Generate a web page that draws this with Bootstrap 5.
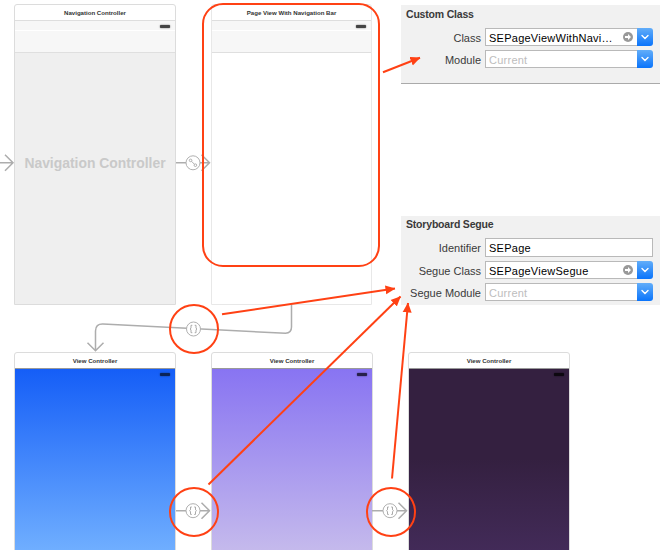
<!DOCTYPE html>
<html lang="en">
<head>
<meta charset="utf-8">
<meta name="viewport" content="width=device-width, initial-scale=1">
<title>Storyboard</title>
<link href="https://cdn.jsdelivr.net/npm/bootstrap@5.3.0/dist/css/bootstrap.min.css" rel="stylesheet">
<style>
body{font-family:"Liberation Sans",Arial,sans-serif;font-size:11px;line-height:1;color:#3a3a3a}
.storyboard{width:660px;height:550px}
/* scenes are nodes on the free canvas */
.scene{width:162px;height:301px;border:1px solid #dcdcdc;border-radius:3px 3px 0 0;background:#fff}
.scene-title{height:16px;font-size:6.1px;font-weight:700;color:#333;border-bottom:1px solid #dedede;padding-top:1px}
.scene-status{height:10px;background:#f7f7f7;border-bottom:1px solid #fff;padding:3px 5px 0 0}
.scene-nav{height:22px;background:#f7f7f7;border-bottom:1px solid #dfdfdf}
.battery{width:10px;height:3px;margin-top:.5px;border-radius:1px;background:#444;box-shadow:0 0 1.5px #444}
.s1{left:14px;top:4px}.s2{left:211px;top:4px;width:161px;border-color:#e8e8e8}
.s3{left:14px;top:352px}.s4{left:211px;top:352px}.s5{left:408px;top:352px}
.s1 .scene-body{background:#efefef;color:#c9c9c9;font-size:13.9px;font-weight:700;padding-bottom:30px}
.s3 .scene-title,.s4 .scene-title,.s5 .scene-title{border-bottom-color:#999}
.s3 .scene-body,.s4 .scene-body,.s5 .scene-body{padding:3px 5px 0 0}
.s3 .scene-body{background:linear-gradient(#155ef7,#71b0ff 185px)}
.s4 .scene-body{background:linear-gradient(#8874f2,#c6bbec 185px)}
.s5 .scene-body{background:linear-gradient(#342040,#342040 90px,#432b59 185px)}
.s3 .battery{background:#0b2458;box-shadow:0 0 1.5px #0b2458}
.s4 .battery{background:#27214a;box-shadow:0 0 1.5px #27214a}
.s5 .battery{background:#0d0810;box-shadow:0 0 1.5px #0d0810}
/* inspectors */
.inspector{left:401px;width:259px;background:#f1f1f1;padding-right:7px}
.p1{top:5px;height:79px;border-bottom:1px solid #aaa}
.p2{top:216px;height:89px}
.inspector h2{font-size:10.5px;font-weight:700;letter-spacing:-.19px;line-height:12px;margin:0;padding:3px 0 0 5px;height:23px}
.p2 h2{height:22px;padding-top:2px}
.prop{height:18px;margin-bottom:4px}
.prop.tall{height:19px}
.prop label{width:80px;text-align:right;padding-top:5px}
.field{width:168px;background:#fff;border:1px solid #b9b9b9;color:#000;letter-spacing:.25px;padding:2px 0 0 3px}
.combo{padding-right:0;border-right:0;width:152px}
.ghost{color:#bdbdbd}
.combo svg{margin:-3px 4px 0 0}
.drop{width:16px;background:linear-gradient(#62adf9,#0a74fb);border-radius:0 3px 3px 0}
</style>
<script src="https://cdn.jsdelivr.net/npm/bootstrap@5.3.0/dist/js/bootstrap.bundle.min.js"></script>
</head>
<body class="bg-white overflow-hidden">
<main class="storyboard position-relative overflow-hidden">
  <section class="scene s1 position-absolute d-flex flex-column">
    <div class="scene-title d-flex align-items-center justify-content-center">Navigation Controller</div>
    <div class="scene-status d-flex justify-content-end"><i class="battery"></i></div>
    <div class="scene-nav"></div>
    <div class="scene-body flex-grow-1 d-flex align-items-center justify-content-center text-nowrap">Navigation Controller</div>
  </section>
  <section class="scene s2 position-absolute d-flex flex-column">
    <div class="scene-title d-flex align-items-center justify-content-center">Page View With Navigation Bar</div>
    <div class="scene-status d-flex justify-content-end"><i class="battery"></i></div>
    <div class="scene-nav"></div>
    <div class="scene-body flex-grow-1"></div>
  </section>
  <section class="scene s3 position-absolute d-flex flex-column">
    <div class="scene-title d-flex align-items-center justify-content-center">View Controller</div>
    <div class="scene-body flex-grow-1 d-flex justify-content-end"><i class="battery"></i></div>
  </section>
  <section class="scene s4 position-absolute d-flex flex-column">
    <div class="scene-title d-flex align-items-center justify-content-center">View Controller</div>
    <div class="scene-body flex-grow-1 d-flex justify-content-end"><i class="battery"></i></div>
  </section>
  <section class="scene s5 position-absolute d-flex flex-column">
    <div class="scene-title d-flex align-items-center justify-content-center">View Controller</div>
    <div class="scene-body flex-grow-1 d-flex justify-content-end"><i class="battery"></i></div>
  </section>

  <aside class="inspector p1 position-absolute">
    <h2>Custom Class</h2>
    <div class="prop d-flex"><label class="me-1">Class</label><div class="field combo d-flex align-items-center justify-content-between text-nowrap"><span>SEPageViewWithNavi…</span><svg width="10" height="10"><use href="#go"/></svg></div><div class="drop"><svg class="d-block" width="16" height="18"><use href="#chev"/></svg></div></div>
    <div class="prop d-flex"><label class="me-1">Module</label><div class="field combo ghost d-flex align-items-center">Current</div><div class="drop"><svg class="d-block" width="16" height="18"><use href="#chev"/></svg></div></div>
  </aside>
  <aside class="inspector p2 position-absolute">
    <h2>Storyboard Segue</h2>
    <div class="prop tall d-flex"><label class="me-1">Identifier</label><div class="field d-flex align-items-center">SEPage</div></div>
    <div class="prop d-flex"><label class="me-1">Segue Class</label><div class="field combo d-flex align-items-center justify-content-between"><span>SEPageViewSegue</span><svg width="10" height="10"><use href="#go"/></svg></div><div class="drop"><svg class="d-block" width="16" height="18"><use href="#chev"/></svg></div></div>
    <div class="prop d-flex"><label class="me-1">Segue Module</label><div class="field combo ghost d-flex align-items-center">Current</div><div class="drop"><svg class="d-block" width="16" height="18"><use href="#chev"/></svg></div></div>
  </aside>

  <svg class="position-absolute top-0 start-0" width="660" height="550" fill="none">
    <defs>
      <symbol id="go" viewBox="0 0 10 10"><circle cx="5" cy="5" r="5" fill="#999"/><path d="M2 4h3V2l3 3-3 3V6H2z" fill="#fff"/></symbol>
      <symbol id="chev" viewBox="0 0 16 18"><path d="M5 7.400l3 3 3-3" fill="none" stroke="#fff" stroke-width="1.400" stroke-linecap="round"/></symbol>
      <g id="braces"><circle r="7" fill="#fff" stroke="#b0b0b0"/><path d="M-1.200-3.700H-2.500V-.8L-3.500 0-2.500.8V3.700H-1.200M1.200-3.700H2.500V-.8L3.500 0 2.500.8V3.700H1.200" stroke="#aaa"/></g>
      <marker id="tip" viewBox="0 0 10 10" refX="9.500" refY="5" markerWidth="10" markerHeight="10" markerUnits="userSpaceOnUse" orient="auto"><path d="M0 .5L10 5 0 9.500z" fill="#ff4114"/></marker>
    </defs>
    <!-- segues -->
    <g stroke="#adadad" stroke-width="1.500">
      <path d="M0 162.800h13M5 154.800l8 8-8 8M176 162.800h34M201.500 154.800l8 8-8 8"/>
      <path d="M291.500 305v22q0 6-6 6.300L103 324q-7.500-.3-7.500 7v19M87.500 342.800l8 8 8-8"/>
      <path d="M176 510.700h34M201.500 502.700l8 8-8 8M372 510.700h34M398.500 502.700l8 8-8 8"/>
    </g>
    <g stroke="#b0b0b0"><circle cx="193" cy="162.800" r="7" fill="#fff"/><path d="M191.600 161.400l2.800 2.800"/><circle cx="190.600" cy="160.400" r="1.300"/><circle cx="195.400" cy="165.200" r="1.300"/></g>
    <use href="#braces" x="193.500" y="329"/>
    <use href="#braces" x="193" y="510.700"/>
    <use href="#braces" x="390" y="510.700"/>
    <!-- callouts -->
    <g stroke="#ff4114" stroke-width="2">
      <rect x="203" y="4" width="176" height="262" rx="20"/>
      <circle cx="194" cy="329" r="24"/><circle cx="194" cy="512" r="24"/><circle cx="391" cy="512" r="24"/>
      <g marker-end="url(#tip)">
        <path d="M383 72.300L420 57.800"/><path d="M222 314.200L395 288.500"/><path d="M208.500 484.500L400.500 296.500"/><path d="M392 478.500L408 303"/>
      </g>
    </g>
  </svg>
</main>
</body>
</html>
